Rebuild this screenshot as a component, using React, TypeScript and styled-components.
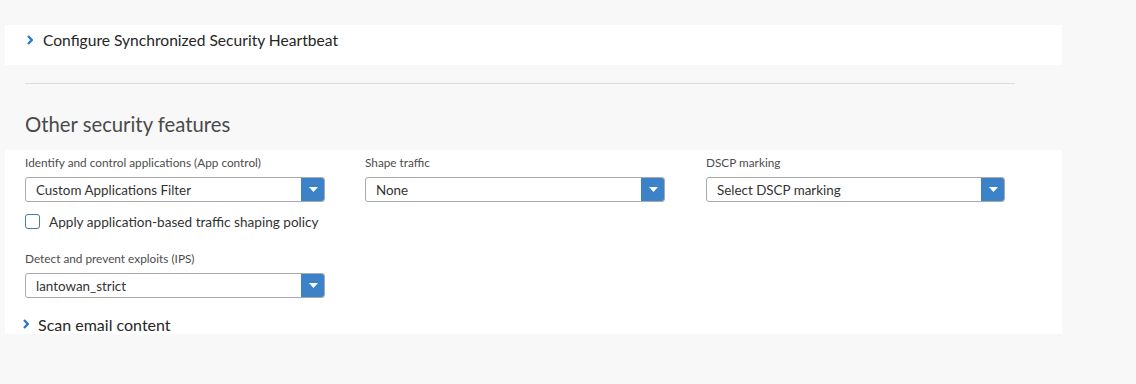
import React from "react";
import styled, { createGlobalStyle } from "styled-components";

const Global = createGlobalStyle`
  html, body { margin: 0; padding: 0; background: #f8f8f8; }
  body { font-family: Lato, "Noto Sans", sans-serif; color: #333; }
`;

const Page = styled.div`
  width: 1136px;
  height: 384px;
  padding-top: 25px;
  box-sizing: border-box;
`;

const Panel = styled.div<{ $h: number }>`
  margin-left: 5px;
  width: 1057px;
  height: ${(p) => p.$h}px;
  background: #fff;
  box-sizing: border-box;
`;

const HeaderPanel = styled(Panel)`
  display: flex;
  align-items: flex-start;
  padding: 5px 0 0 22px;
`;

const Toggle = styled.div<{ $size: number; $gap: number }>`
  display: flex;
  align-items: center;
  gap: ${(p) => p.$gap}px;
  height: 20px;
  font-size: ${(p) => p.$size}px;
  color: #262626;
  white-space: nowrap;
`;

const Divider = styled.div`
  margin: 18px 0 0 25px;
  width: 990px;
  height: 1px;
  background: #dcdcdc;
`;

const Heading = styled.h2`
  margin: 0;
  padding: 28px 0 0 25px;
  height: 66px;
  box-sizing: border-box;
  font-size: 20.3px;
  font-weight: 400;
  color: #4a4a4a;
  line-height: 24px;
`;

const FormPanel = styled(Panel)`
  padding: 5px 0 0 20px;
  display: flex;
  flex-direction: column;
`;

const Grid = styled.div`
  display: grid;
  grid-template-columns: 300px 300px 300px;
  column-gap: 40px;
  width: 981px;
  & > :nth-child(3) { margin-left: 1px; }
`;

const Field = styled.div`
  display: flex;
  flex-direction: column;
`;

const Label = styled.div`
  font-size: 11.8px;
  line-height: 16px;
  color: #4d4d4d;
  height: 22px;
  white-space: nowrap;
`;

const SelectBox = styled.div`
  display: flex;
  height: 25px;
  box-sizing: border-box;
  border: 1px solid #a9a9a9;
  border-radius: 3px;
  overflow: hidden;
  background: #fff;
`;

const SelectText = styled.div`
  flex: 1;
  display: flex;
  align-items: center;
  padding-left: 10px;
  font-size: 13.4px;
  color: #333;
  white-space: nowrap;
`;

const SelectButton = styled.div`
  width: 24px;
  margin: -1px -1px -1px 0;
  background: #3b82c9;
  display: flex;
  align-items: center;
  justify-content: center;
`;

const CheckRow = styled.label`
  display: flex;
  align-items: center;
  gap: 9px;
  margin-top: 12px;
  height: 15px;
  font-size: 13.6px;
  color: #333;
  white-space: nowrap;
`;

const Box = styled.span`
  flex: none;
  width: 15px;
  height: 15px;
  box-sizing: border-box;
  border: 1.5px solid #4a78a8;
  border-radius: 3px;
`;

const Spacer = styled.div<{ $h: number }>`
  height: ${(p) => p.$h}px;
`;

const ScanRow = styled.div`
  margin-left: -2px;
`;

const Chevron = () => (
  <svg width="6" height="10" viewBox="0 0 6 10">
    <path d="M1 1 L4.8 5 L1 9" fill="none" stroke="#2c76c8" strokeWidth="2.3" />
  </svg>
);

const Caret = () => (
  <svg width="9" height="5" viewBox="0 0 9 5">
    <path d="M0 0 H9 L4.5 5 Z" fill="#fff" />
  </svg>
);

const Select = ({ value }: { value: string }) => (
  <SelectBox>
    <SelectText>{value}</SelectText>
    <SelectButton>
      <Caret />
    </SelectButton>
  </SelectBox>
);

export default function App() {
  return (
    <Page>
      <Global />
      <HeaderPanel $h={40}>
        <Toggle $size={15.6} $gap={10}>
          <Chevron />
          Configure Synchronized Security Heartbeat
        </Toggle>
      </HeaderPanel>
      <Divider />
      <Heading>Other security features</Heading>
      <FormPanel $h={184}>
        <Grid>
          <Field>
            <Label>Identify and control applications (App control)</Label>
            <Select value="Custom Applications Filter" />
            <CheckRow>
              <Box />
              Apply application-based traffic shaping policy
            </CheckRow>
          </Field>
          <Field>
            <Label>Shape traffic</Label>
            <Select value="None" />
          </Field>
          <Field>
            <Label>DSCP marking</Label>
            <Select value="Select DSCP marking" />
          </Field>
        </Grid>
        <Spacer $h={22} />
        <Grid>
          <Field>
            <Label>Detect and prevent exploits (IPS)</Label>
            <Select value="lantowan_strict" />
          </Field>
        </Grid>
        <Spacer $h={16} />
        <ScanRow>
          <Toggle $size={16} $gap={9}>
            <Chevron />
            Scan email content
          </Toggle>
        </ScanRow>
      </FormPanel>
    </Page>
  );
}
